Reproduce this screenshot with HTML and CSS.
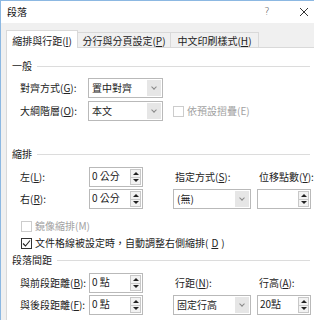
FILE: index.html
```html
<!DOCTYPE html>
<html lang="zh-Hant">

<head>
    <meta charset="UTF-8">
    <meta name="viewport" content="width=device-width, initial-scale=1.0">
    <title>段落</title>
    <link rel="stylesheet" href="styles.css">
</head>

<body>
    <div class="dialog">
        <!-- 標題列 -->
        <div class="titlebar">
            <span class="title">段落</span>
            <span class="help">?</span>
            <span class="close">
                <svg width="10" height="10" viewBox="0 0 10 10"><path d="M1 1L9 9M9 1L1 9" stroke="#333" stroke-width="1" fill="none"/></svg>
            </span>
        </div>

        <div class="content">
            <!-- 分頁 -->
            <div class="tabs">
                <div class="tab active">縮排與行距(<u>I</u>)</div>
                <div class="tab">分行與分頁設定(<u>P</u>)</div>
                <div class="tab">中文印刷樣式(<u>H</u>)</div>
            </div>

            <div class="panel">
                <!-- 一般 -->
                <div class="group">一般</div>
                <div class="grid general">
                    <label>對齊方式(<u>G</u>):</label>
                    <div class="select"><span>置中對齊</span><i class="drop"></i></div>
                    <span></span>
                    <label>大綱階層(<u>O</u>):</label>
                    <div class="select"><span>本文</span><i class="drop"></i></div>
                    <div class="check disabled"><i class="box"></i>依預設摺疊(E)</div>
                </div>

                <!-- 縮排 -->
                <div class="group indent-title">縮排</div>
                <div class="grid fields">
                    <label>左(<u>L</u>):</label>
                    <div class="spin"><span>0 公分</span><i class="arrows"><b class="up"></b><b class="down"></b></i></div>
                    <span></span>
                    <label class="top">指定方式(<u>S</u>):</label>
                    <span></span>
                    <label class="top">位移點數(<u>Y</u>):</label>

                    <label>右(<u>R</u>):</label>
                    <div class="spin"><span>0 公分</span><i class="arrows"><b class="up"></b><b class="down"></b></i></div>
                    <span></span>
                    <div class="select"><span>(無)</span><i class="drop"></i></div>
                    <span></span>
                    <div class="spin"><span></span><i class="arrows"><b class="up"></b><b class="down"></b></i></div>
                </div>

                <div class="check disabled mirror"><i class="box"></i>鏡像縮排(M)</div>
                <div class="check checked"><i class="box"><svg width="9" height="9" viewBox="0 0 9 9"><path d="M1 4.5L3.5 7L8 1.5" stroke="#222" stroke-width="1.1" fill="none"/></svg></i>文件格線被設定時，自動調整右側縮排(<u>D</u>)</div>

                <!-- 段落間距 -->
                <div class="group spacing-title">段落間距</div>
                <div class="grid fields">
                    <label>與前段距離(<u>B</u>):</label>
                    <div class="spin"><span>0 點</span><i class="arrows"><b class="up"></b><b class="down"></b></i></div>
                    <span></span>
                    <label class="top">行距(<u>N</u>):</label>
                    <span></span>
                    <label class="top">行高(<u>A</u>):</label>

                    <label>與後段距離(<u>F</u>):</label>
                    <div class="spin"><span>0 點</span><i class="arrows"><b class="up"></b><b class="down"></b></i></div>
                    <span></span>
                    <div class="select"><span>固定行高</span><i class="drop"></i></div>
                    <span></span>
                    <div class="spin"><span>20點</span><i class="arrows"><b class="up"></b><b class="down"></b></i></div>
                </div>
            </div>
        </div>
    </div>
</body>

</html>
```

FILE: styles.css
```css
/* 기본 */
* {
    margin: 0;
    padding: 0;
    box-sizing: border-box;
}

body {
    width: 314px;
    height: 320px;
    overflow: hidden;
    background: #f0f0f0;
    font-family: "Noto Sans CJK TC", "Noto Sans", sans-serif;
    font-size: 10px;
    line-height: 14px;
    color: #222;
}

u {
    text-decoration: underline;
    text-underline-offset: 1px;
}

/* 視窗 */
.dialog {
    height: 320px;
    border-top: 1px solid #8cb8e2;
    border-left: 1px solid #8cb8e2;
}

.titlebar {
    display: flex;
    align-items: center;
    height: 22px;
    padding-left: 6px;
    padding-right: 4px;
    background: #fff;
    color: #111;
}

.title {
    flex: 1;
}

.help {
    width: 12px;
    margin-right: 25px;
    text-align: center;
    color: #444;
    font-family: "DejaVu Sans", sans-serif;
    font-weight: 300;
}

.close {
    display: flex;
    justify-content: center;
    width: 12px;
}

.content {
    padding-top: 7px;
}

/* 分頁 */
.tabs {
    display: flex;
    align-items: flex-start;
    padding-left: 5px;
    height: 17px;
}

.tab {
    height: 16px;
    margin-top: 2px;
    padding-top: 1px;
    border-top: 1px solid #d9d9d9;
    border-right: 1px solid #d9d9d9;
    text-align: center;
    white-space: nowrap;
}

.tab:nth-child(2) {
    width: 93px;
}

.tab:nth-child(3) {
    width: 88px;
}

.tab.active {
    position: relative;
    z-index: 1;
    width: 72px;
    height: 18px;
    margin-top: 0;
    padding-top: 3px;
    border-left: 1px solid #d9d9d9;
    background: #fff;
}

.panel {
    width: 310px;
    height: 280px;
    margin-left: 5px;
    padding: 11px 5px 0 5px;
    border: 1px solid #d9d9d9;
    background: #fff;
}

/* 群組標題 */
.group {
    display: flex;
    align-items: center;
    gap: 5px;
    height: 14px;
}

.group::after {
    content: "";
    flex: 1;
    height: 1px;
    background: #dcdcdc;
}

.indent-title {
    margin-top: 26px;
}

.spacing-title {
    margin-top: 3px;
}

/* 欄位格線 */
.grid {
    display: grid;
    grid-auto-rows: 20px;
    padding-left: 8px;
    white-space: nowrap;
}

.general {
    grid-template-columns: 68px 75px auto;
    row-gap: 3px;
    margin-top: 5px;
}

.general .check {
    margin-left: 10px;
    padding-left: 0;
}

.fields {
    grid-template-columns: 69px 54px 30px 78px 6px 54px;
    row-gap: 2px;
    margin-top: 6px;
}

.grid label {
    align-self: center;
}

.grid label.top {
    padding-left: 2px;
}

/* 下拉選單 */
.select {
    display: flex;
    padding: 1px;
    border: 1px solid #b9b9b9;
    background: #fff;
}

.select span {
    flex: 1;
    padding-left: 2px;
    align-self: center;
}

.drop {
    width: 14px;
    background: #e6e6e6;
    position: relative;
}

.drop::after {
    content: "";
    position: absolute;
    left: 5px;
    top: 5px;
    width: 3px;
    height: 3px;
    border-right: 1px solid #888;
    border-bottom: 1px solid #888;
    transform: rotate(45deg);
}

/* 數值欄 */
.spin {
    display: flex;
    padding: 1px;
    border: 1px solid #b9b9b9;
    background: #fff;
}

.spin span {
    flex: 1;
    padding-left: 1px;
}

.arrows {
    display: flex;
    flex-direction: column;
    width: 11px;
}

.arrows b {
    flex: 1;
    display: flex;
    align-items: center;
    justify-content: center;
    border: 1px solid #c8c8c8;
    background: #f2f2f2;
}

.arrows b + b {
    border-top: none;
}

.arrows b::after {
    content: "";
    border-left: 3px solid transparent;
    border-right: 3px solid transparent;
}

.up::after {
    border-bottom: 3px solid #222;
}

.down::after {
    border-top: 3px solid #222;
}

/* 核取方塊 */
.check {
    display: flex;
    align-items: center;
    gap: 3px;
    height: 14px;
    padding-left: 9px;
    white-space: nowrap;
}

.box {
    display: flex;
    align-items: center;
    justify-content: center;
    width: 11px;
    height: 11px;
    border: 1px solid #333;
    background: #fff;
}

.general .check {
    align-self: center;
}

.disabled {
    color: #a2a2a2;
}

.disabled .box {
    border-color: #cccccc;
}

.mirror {
    margin-top: 10px;
}

.checked {
    margin-top: 3px;
}
```
